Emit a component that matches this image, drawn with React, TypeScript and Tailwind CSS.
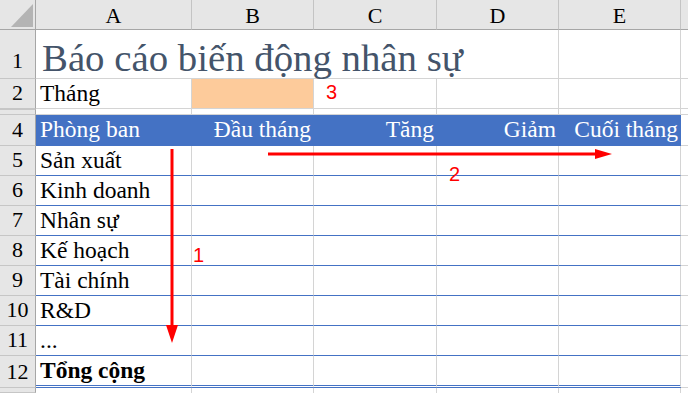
const cols = ['A', 'B', 'C', 'D', 'E'];

const departments = ['Sản xuất', 'Kinh doanh', 'Nhân sự', 'Kế hoạch', 'Tài chính', 'R&D', '...'];

const headers = ['Đầu tháng', 'Tăng', 'Giảm', 'Cuối tháng'];

function RowHead({ n, className = '' }: { n?: string; className?: string }) {
  return (
    <div
      className={`flex items-end justify-center overflow-hidden bg-[#e6e6e6] border-r border-b border-r-[#a6a6a6] border-b-[#c6c6c6] text-[22px] leading-none text-black ${className}`}
    >
      {n}
    </div>
  );
}

function Cell({ children, className = '' }: { children?: React.ReactNode; className?: string }) {
  return (
    <div className={`flex items-end overflow-visible whitespace-nowrap border-r border-b border-[#d4d4d4] ${className}`}>
      {children}
    </div>
  );
}

export default function App() {
  return (
    <div className="relative w-[688px] h-[393px] overflow-hidden bg-white font-['Liberation_Serif',serif] text-black">
      <div className="grid grid-cols-[36px_156px_122px_123px_122px_122px_7px] grid-rows-[30px_49px_30px_6px_31px_30px_30px_30px_30px_30px_30px_30px_32px_5px]">
        {/* column letters */}
        <div className="relative bg-[#e6e6e6] border-r border-b border-[#a6a6a6]">
          <div className="absolute left-[11px] top-[4px] w-0 h-0 border-l-[22px] border-l-transparent border-b-[23px] border-b-[#b4b4b4]" />
        </div>
        {cols.map((c) => (
          <div
            key={c}
            className="flex items-end justify-center pb-[2px] bg-[#e6e6e6] border-r border-b border-r-[#c4c4c4] border-b-[#a6a6a6] text-[22px] leading-none"
          >
            {c}
          </div>
        ))}
        <div className="bg-[#e6e6e6] border-b border-[#a6a6a6]" />

        {/* row 1: title */}
        <RowHead n="1" className="pb-[6px]" />
        <div className="col-span-4 flex items-end pl-[6px] whitespace-nowrap border-r border-b border-[#d4d4d4] text-[38.8px] leading-none text-[#44546a]">
          Báo cáo biến động nhân sự
        </div>
        <Cell />
        <div className="border-b border-[#d4d4d4]" />

        {/* row 2 */}
        <RowHead n="2" className="pb-[4px]" />
        <Cell className="pl-[4px] pb-[3px] text-[23.5px] leading-none">Tháng</Cell>
        <Cell className="bg-[#fdcb9b] border-[#c8c8c8]" />
        <Cell />
        <Cell />
        <Cell />
        <div className="border-b border-[#d4d4d4]" />

        {/* row 3 is hidden */}
        <RowHead className="border-t border-t-[#c6c6c6]" />
        {cols.map((c) => (
          <Cell key={c} />
        ))}
        <div className="border-b border-[#d4d4d4]" />

        {/* row 4: table header */}
        <RowHead n="4" className="pb-[4px]" />
        <div className="flex items-end pl-[4px] pb-[5px] bg-[#4472c4] text-white text-[23.5px] leading-none whitespace-nowrap">
          Phòng ban
        </div>
        {headers.map((h) => (
          <div
            key={h}
            className="flex items-end justify-end pr-[3px] pb-[5px] bg-[#4472c4] text-white text-[23.5px] leading-none whitespace-nowrap"
          >
            {h}
          </div>
        ))}
        <div className="border-b border-[#d4d4d4]" />

        {/* rows 5-11 */}
        {departments.map((d, i) => (
          <div key={d} className="contents">
            <RowHead n={String(i + 5)} className="pb-[4px]" />
            <Cell className="pl-[4px] pb-[3px] text-[23.5px] leading-none border-b-[#4472c4]">{d}</Cell>
            {headers.map((h) => (
              <Cell key={h} className="border-b-[#4472c4]" />
            ))}
            <div className="border-b border-[#d4d4d4]" />
          </div>
        ))}

        {/* row 12: total */}
        <RowHead n="12" className="pb-[4px]" />
        <Cell className="pl-[4px] pb-[3px] text-[23.5px] leading-none font-bold border-b-[3px] border-b-[#4472c4] border-double">
          Tổng cộng
        </Cell>
        {headers.map((h) => (
          <Cell key={h} className="border-b-[3px] border-b-[#4472c4] border-double" />
        ))}
        <div className="border-b border-[#d4d4d4]" />

        {/* row 13, cut off */}
        <RowHead />
        {cols.map((c) => (
          <div key={c} className="border-r border-[#d4d4d4]" />
        ))}
        <div />
      </div>

      {/* red annotations */}
      <svg className="absolute left-0 top-0 pointer-events-none" width="688" height="393" viewBox="0 0 688 393">
        <line x1="172" y1="149" x2="172" y2="328" stroke="#ff0000" strokeWidth="3" />
        <polygon points="166,325 178,325 172,343" fill="#ff0000" />
        <line x1="268" y1="154" x2="597" y2="154" stroke="#ff0000" strokeWidth="3" />
        <polygon points="595,149 595,159 612,154" fill="#ff0000" />
      </svg>
      <span className="absolute left-[193px] top-[245px] font-['Liberation_Sans',sans-serif] text-[20px] leading-none text-[#ff0000]">
        1
      </span>
      <span className="absolute left-[449px] top-[164px] font-['Liberation_Sans',sans-serif] text-[20px] leading-none text-[#ff0000]">
        2
      </span>
      <span className="absolute left-[326px] top-[82px] font-['Liberation_Sans',sans-serif] text-[20px] leading-none text-[#ff0000]">
        3
      </span>
    </div>
  );
}
